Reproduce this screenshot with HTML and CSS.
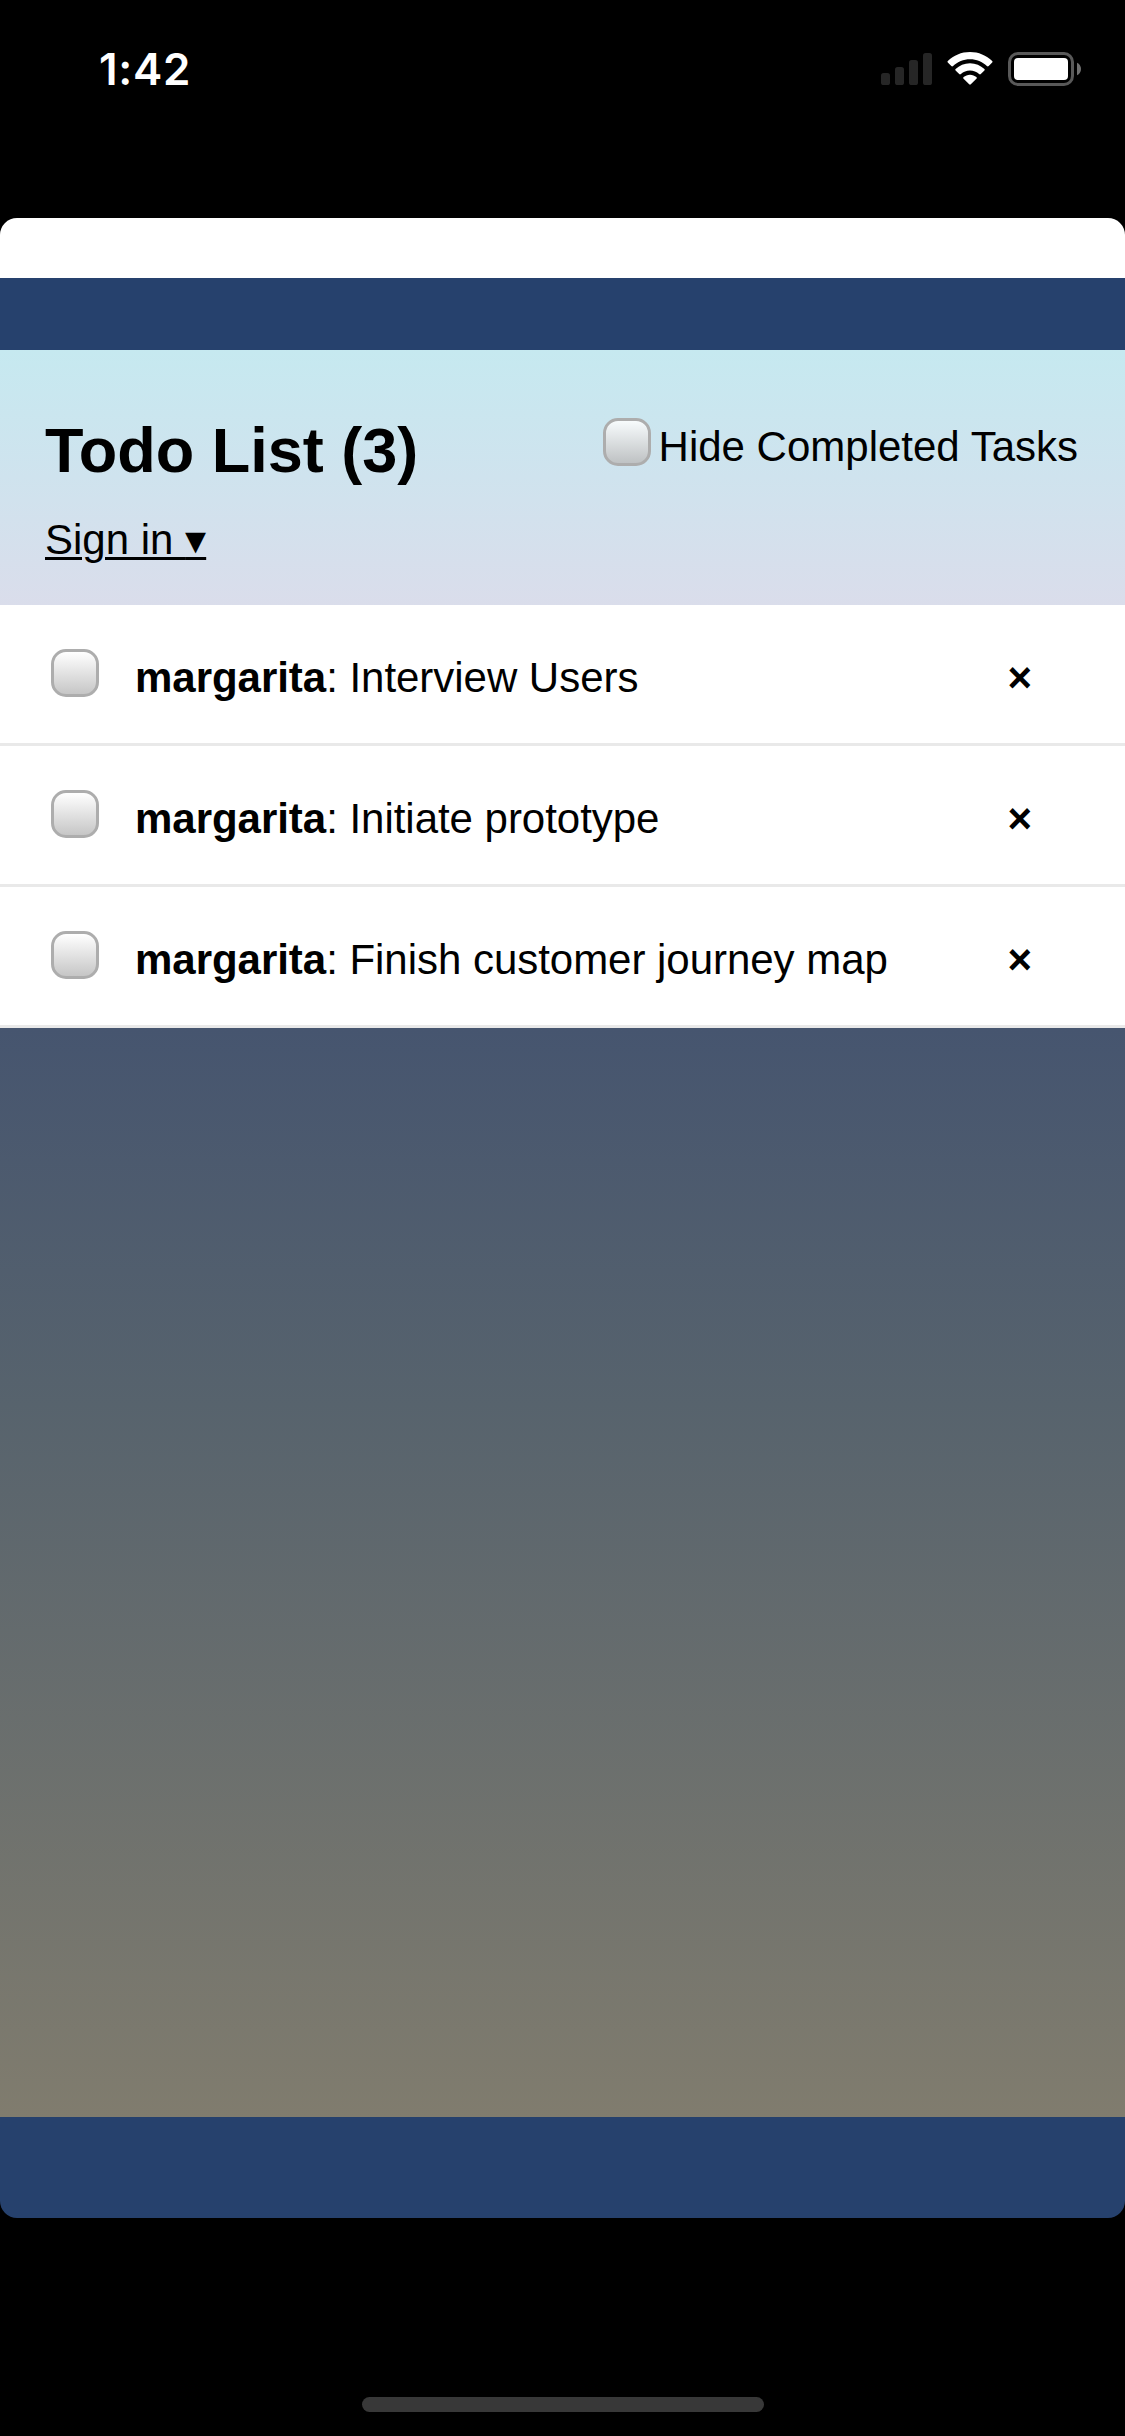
FILE: index.html
```html
<!DOCTYPE html>
<html lang="en">
<head>
<meta charset="utf-8">
<title>Todo List</title>
<link rel="stylesheet" href="styles.css">
</head>
<body>
<div class="status-bar">
  <time class="clock">1:42</time>
  <div class="indicators">
    <svg class="signal" width="52" height="32" viewBox="0 0 52 32" fill="#262626">
      <rect x="0" y="20" width="9" height="12" rx="2.6"/>
      <rect x="14" y="14" width="9" height="18" rx="2.6"/>
      <rect x="28" y="7" width="9" height="25" rx="2.6"/>
      <rect x="42" y="0" width="9" height="32" rx="2.6"/>
    </svg>
    <svg class="wifi" width="46" height="33" viewBox="0 0 46 33" fill="#fff">
      <path d="M23 0C31.600 0 39.400 3.400 45.200 8.900Q46 9.800 45.200 10.600L41.700 14Q40.800 14.800 39.900 14C35.500 9.800 29.500 7.300 23 7.300S10.500 9.800 6.100 14Q5.200 14.800 4.300 14L.8 10.600Q0 9.800 .8 8.900C6.600 3.400 14.400 0 23 0Z"/>
      <path d="M23 11.200C28.600 11.200 33.600 13.400 37.400 17Q38.200 17.800 37.400 18.600L33.800 22.100Q33 22.900 32.100 22.100C29.700 19.900 26.500 18.600 23 18.600S16.300 19.900 13.900 22.100Q13 22.900 12.200 22.100L8.600 18.600Q7.800 17.800 8.600 17C12.400 13.400 17.400 11.200 23 11.200Z"/>
      <path d="M23 22.700C25.400 22.700 27.700 23.600 29.400 25.100Q30.200 25.900 29.400 26.700L23.800 32.300Q23 33.100 22.200 32.300L16.600 26.700Q15.800 25.900 16.600 25.100C18.300 23.600 20.600 22.700 23 22.700Z"/>
    </svg>
    <svg class="battery" width="73" height="34" viewBox="0 0 73 34">
      <rect x="1.500" y="1.500" width="63" height="31" rx="8.500" fill="none" stroke="#595959" stroke-width="3"/>
      <rect x="6" y="6" width="54" height="22" rx="4" fill="#fff"/>
      <path d="M69 10.700C71.500 11.900 73 14.300 73 17S71.500 22.100 69 23.300Z" fill="#707070"/>
    </svg>
  </div>
</div>
<div class="sheet">
  <main class="app">
    <header class="header">
      <h1 class="title">Todo List (3)</h1>
      <label class="hide-completed"><input type="checkbox" class="check">Hide Completed Tasks</label>
      <a class="sign-in">Sign in <span class="caret">▾</span></a>
    </header>
    <ul class="tasks">
      <li class="task"><input type="checkbox" class="check"><span class="text"><strong>margarita</strong>: Interview Users</span><button class="delete">×</button></li>
      <li class="task"><input type="checkbox" class="check"><span class="text"><strong>margarita</strong>: Initiate prototype</span><button class="delete">×</button></li>
      <li class="task"><input type="checkbox" class="check"><span class="text"><strong>margarita</strong>: Finish customer journey map</span><button class="delete">×</button></li>
    </ul>
  </main>
</div>
<div class="home-indicator"></div>
</body>
</html>
```
FILE: styles.css
```css
* {
  box-sizing: border-box;
}

body {
  margin: 0;
  height: 2436px;
  background: #000;
  color: #000;
  font: 42px/48px "Liberation Sans", Arial, sans-serif;
  display: flex;
  flex-direction: column;
  overflow: hidden;
}

.status-bar {
  height: 218px;
  padding: 45px 44px 0 99px;
  display: flex;
  justify-content: space-between;
  align-items: flex-start;
}

.clock {
  color: #fff;
  font: 600 44px/48px Inter, sans-serif;
  letter-spacing: .7px;
}

.indicators {
  display: flex;
  align-items: flex-start;
  padding-top: 7px;
}

.signal {
  margin-top: 1px;
}

.wifi {
  margin-left: 14px;
}

.battery {
  margin-left: 15px;
}

.sheet {
  height: 2000px;
  border-top: 60px solid #fff;
  border-bottom: 101px solid #26416d;
  border-radius: 17px;
}

.app {
  height: 1839px;
  border-top: 72px solid #26416d;
  display: flex;
  flex-direction: column;
  background: linear-gradient(#46556f 678px, #57636d 1054px, #807c6e);
}

.header {
  flex: none;
  height: 254.600px;
  padding: 67px 47px 0 45px;
  display: grid;
  grid-template-columns: 1fr auto;
  grid-template-rows: 99px 48px;
  align-content: start;
  background: linear-gradient(#c6e9f0, #cfe3ee 50%, #daddeb);
}

.title {
  margin: 0;
  font-size: 63px;
  line-height: 67px;
}

.hide-completed {
  display: flex;
  gap: 8px;
  padding-top: 6px;
  height: 54px;
}

.hide-completed .check {
  margin-top: -5px;
}

.check {
  appearance: none;
  flex: none;
  width: 48px;
  height: 48px;
  margin: 0;
  border: 3px solid #adadad;
  border-radius: 15px;
  background: linear-gradient(rgba(255, 255, 255, .85), rgba(188, 188, 188, .85));
}

.sign-in {
  justify-self: start;
  text-decoration: underline;
  text-decoration-thickness: 3px;
  text-underline-offset: 3px;
}

.caret {
  font-family: "DejaVu Sans", sans-serif;
  line-height: 1;
}

.tasks {
  list-style: none;
  margin: 0;
  padding: 0;
}

.task {
  height: 141px;
  padding: 49px 93px 0 51px;
  display: flex;
  align-items: flex-start;
  background: #fff;
  border-bottom: 3px solid #e9e9e9;
}

.task .check {
  margin-top: -5px;
}

.text {
  flex: 1;
  margin-left: 36px;
  letter-spacing: -.03px;
}

.delete {
  padding: 0;
  border: 0;
  background: none;
  color: #000;
  font: bold 42px/48px "Liberation Sans", Arial, sans-serif;
}

.home-indicator {
  width: 402px;
  height: 15px;
  margin: 179px auto 0;
  border-radius: 8px;
  background: #383838;
}
```
